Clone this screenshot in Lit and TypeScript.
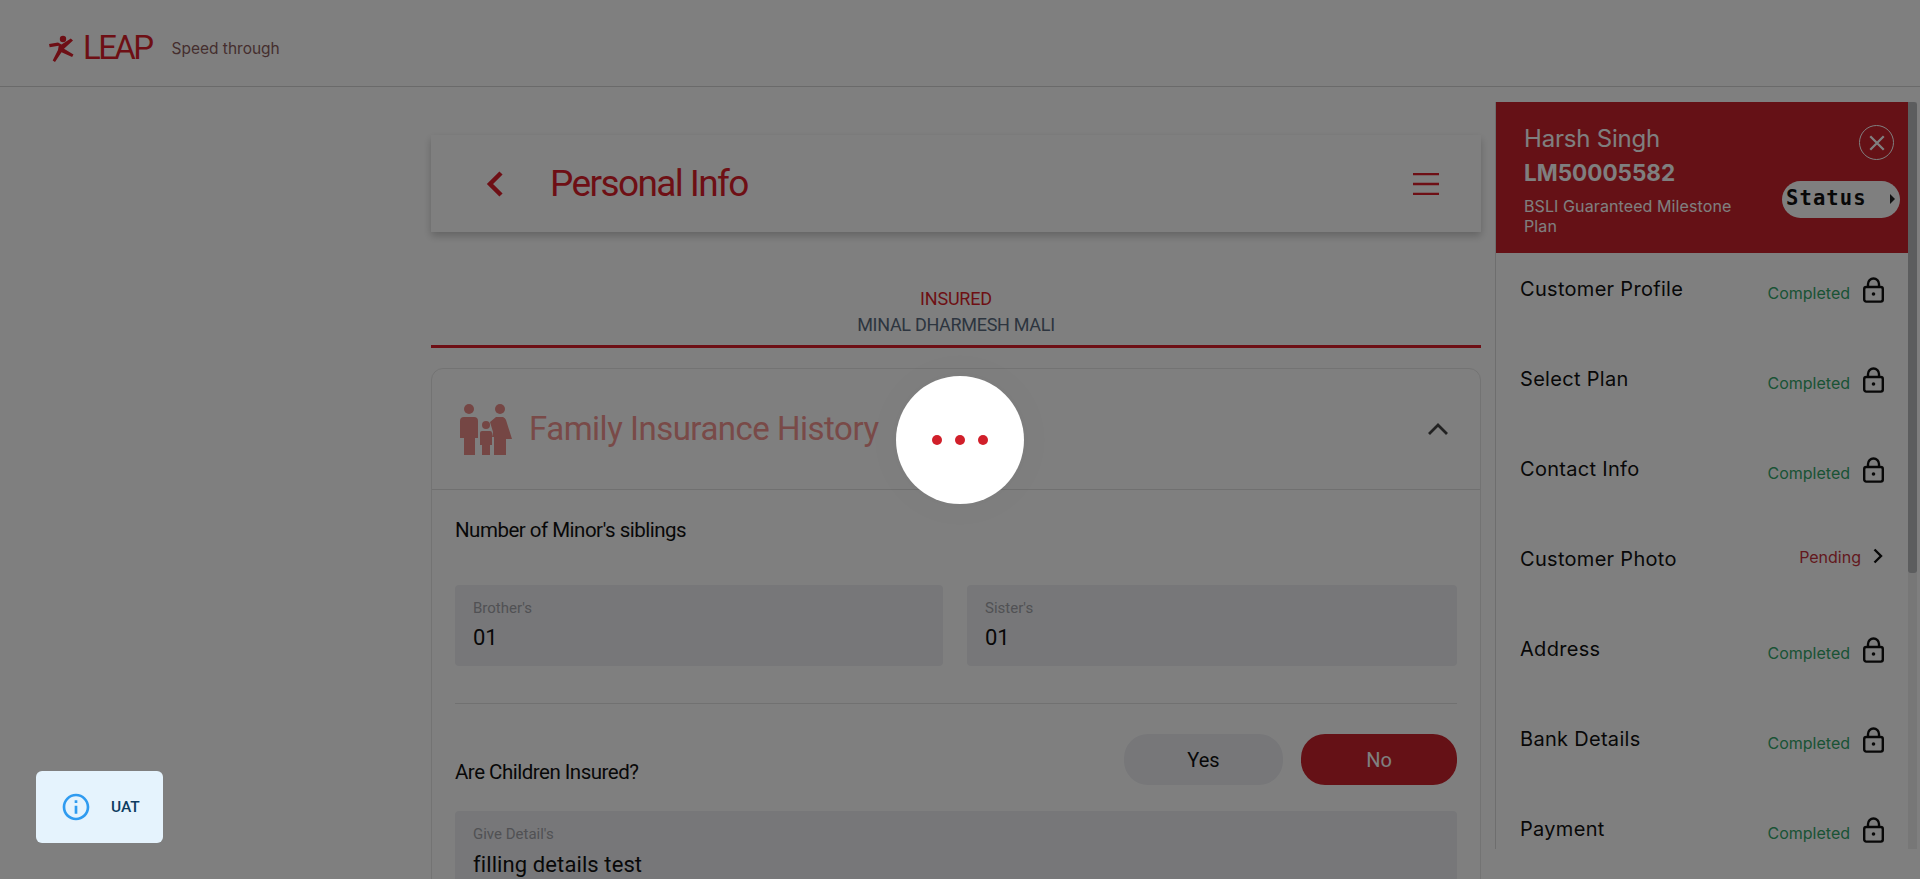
import { LitElement, html, css, svg } from "lit";
import { customElement } from "lit/decorators.js";

const din = css`"Roboto", "Liberation Sans", sans-serif`;

const steps = [
  { name: "Customer Profile", done: true },
  { name: "Select Plan", done: true },
  { name: "Contact Info", done: true },
  { name: "Customer Photo", done: false },
  { name: "Address", done: true },
  { name: "Bank Details", done: true },
  { name: "Payment", done: true },
];

const lockIcon = svg`<svg class="lock" viewBox="0 0 21 26" width="21" height="26" fill="none" stroke="currentColor" stroke-width="2.4">
  <rect x="1.2" y="10" width="18.6" height="14.6" rx="2"></rect>
  <path d="M5 10V7a5.5 5.5 0 0 1 11 0v3"></path>
  <circle cx="10.5" cy="17" r="1.8" fill="currentColor" stroke="none"></circle>
</svg>`;

@customElement("app-root")
export class AppRoot extends LitElement {
  static styles = css`
    :host {
      display: block;
      position: relative;
      width: 1920px;
      height: 879px;
      overflow: hidden;
      background: #fff;
      font-family: ${din};
    }
    .topbar {
      border-bottom: 1px solid #d4d4d4;
      display: flex;
      align-items: center;
      padding: 10px 0 0 49px;
      box-sizing: border-box;
      height: 87px;
    }
    .logo {
      display: flex;
      align-items: center;
      gap: 9px;
      color: #dc1f2b;
    }
    .logo-text {
      font-size: 33px;
      line-height: 32px;
      letter-spacing: -2.6px;
      margin-right: 20px;
    }
    .tagline {
      font-family: "Inter", sans-serif;
      font-size: 15.5px;
      color: #8a5c5c;
    }
    .body {
      display: flex;
      padding-left: 431px;
      gap: 14px;
    }
    .page {
      width: 1050px;
      flex: none;
      padding-top: 48px;
    }
    .title-card {
      height: 97px;
      display: flex;
      align-items: center;
      padding: 0 42px 0 55px;
      box-shadow: 0 4px 8px rgba(0, 0, 0, 0.22);
      color: #dc1f2b;
    }
    .title-card h1 {
      margin: 0 0 0 46px;
      flex: 1;
      font-size: 37px;
      font-weight: 400;
      letter-spacing: -1.6px;
    }
    .person {
      margin-top: 54px;
      text-align: center;
      border-bottom: 3px solid #dc1f2b;
      height: 59px;
      font-size: 18px;
      line-height: 26px;
    }
    .person .role {
      color: #dc1f2b;
      letter-spacing: -0.2px;
    }
    .person .who {
      color: #5a6b7e;
      letter-spacing: -0.3px;
    }
    .card {
      margin-top: 20px;
      border: 1px solid #e6e6e6;
      border-radius: 12px 12px 0 0;
    }
    .card-head {
      height: 120px;
      display: flex;
      align-items: center;
      padding: 0 32px 0 28px;
      border-bottom: 1px solid #e0e0e0;
    }
    .card-head h2 {
      margin: 0 0 0 17px;
      flex: 1;
      font-size: 33px;
      font-weight: 400;
      color: #f29490;
      letter-spacing: -0.5px;
      position: relative;
      top: -1px;
    }
    .card-body {
      padding: 0 23px;
    }
    .question {
      margin: 0;
      font-size: 20.5px;
      line-height: 26px;
      color: #111;
      letter-spacing: -0.5px;
    }
    .siblings {
      padding-top: 27px;
    }
    .field-row {
      display: grid;
      grid-template-columns: 488px 490px;
      gap: 24px;
      margin-top: 42px;
    }
    .field {
      background: #eeeff3;
      border-radius: 4px;
      height: 81px;
      padding: 15px 18px 0;
      box-sizing: border-box;
    }
    .field label {
      display: block;
      font-size: 15px;
      line-height: 17px;
      color: #a2a3a8;
    }
    .field span {
      display: block;
      margin-top: 8px;
      font-size: 22px;
      line-height: 26px;
      color: #111;
    }
    .divider {
      height: 1px;
      background: #e2e2e2;
      margin-top: 37px;
    }
    .insured {
      display: flex;
      align-items: flex-end;
      padding-top: 30px;
    }
    .insured .question {
      flex: 1;
    }
    .pill {
      width: 159px;
      height: 51px;
      border-radius: 24px;
      background: #eeeff3;
      font-size: 20px;
      display: flex;
      align-items: center;
      justify-content: center;
      color: #111;
    }
    .pill.on {
      width: 156px;
      margin-left: 18px;
      background: #ca222c;
      color: #fff;
    }
    .details {
      margin-top: 26px;
      height: 110px;
    }
    .details span {
      margin-top: 9px;
      letter-spacing: 0.1px;
    }
    .panel {
      margin-top: 15px;
      width: 422px;
      height: 747px;
      flex: none;
      display: flex;
      border-left: 1px solid #dcdcdc;
      box-sizing: border-box;
    }
    .panel-main {
      flex: 1;
      overflow: hidden;
    }
    .panel-head {
      height: 151px;
      box-sizing: border-box;
      background: #ca222c;
      color: #fff;
      display: flex;
      padding: 23px 8px 0 28px;
      font-family: "Inter", sans-serif;
    }
    .head-text {
      flex: 1;
    }
    .head-name {
      font-size: 24px;
      line-height: 28px;
      letter-spacing: -0.2px;
    }
    .head-code {
      font-size: 22.5px;
      line-height: 30px;
      font-weight: 700;
      margin-top: 5px;
    }
    .head-plan {
      font-size: 16px;
      line-height: 20px;
      margin-top: 8px;
      width: 230px;
      letter-spacing: 0.1px;
    }
    .head-side {
      display: flex;
      flex-direction: column;
      align-items: flex-end;
    }
    .close {
      width: 35px;
      height: 35px;
      border: 1px solid #fff;
      border-radius: 50%;
      margin: 0 6px 0 0;
      display: flex;
      align-items: center;
      justify-content: center;
      box-sizing: border-box;
    }
    .status {
      margin-top: 21px;
      width: 118px;
      height: 37px;
      border-radius: 19px;
      background: #fff;
      color: #111;
      display: flex;
      align-items: center;
      font-family: "DejaVu Sans Mono", monospace;
      font-weight: 700;
      font-size: 20.5px;
      letter-spacing: 1.1px;
      padding: 0 0 3px 4px;
      box-sizing: border-box;
      position: relative;
    }
    .status i {
      position: absolute;
      right: 5px;
      top: 13px;
      border-left: 5px solid #222;
      border-top: 5px solid transparent;
      border-bottom: 5px solid transparent;
    }
    .step {
      height: 90px;
      display: flex;
      padding: 23px 24px 0 24px;
      box-sizing: border-box;
      font-family: "Inter", sans-serif;
      color: #111;
    }
    .step-name {
      flex: 1;
      font-size: 20px;
      line-height: 26px;
      letter-spacing: 0.3px;
    }
    .step-state {
      font-size: 16px;
      line-height: 22px;
      margin-top: 6px;
    }
    .done {
      color: #33a66a;
    }
    .pending {
      color: #c6323c;
      margin-top: 0;
    }
    .lock {
      margin: 1px 0 0 13px;
    }
    .next {
      margin: 2px 1px 0 12px;
    }
    .scrollbar {
      width: 9px;
      background: #efefef;
    }
    .thumb {
      height: 471px;
      background: #b8babd;
      border-radius: 0 3px 3px 3px;
    }
    .overlay {
      position: absolute;
      inset: 0;
      background: rgba(0, 0, 0, 0.5);
    }
    .loader {
      position: absolute;
      left: 896px;
      top: 376px;
      width: 128px;
      height: 128px;
      border-radius: 50%;
      background: #fff;
      box-shadow: 0 0 40px rgba(0, 0, 0, 0.03);
      display: flex;
      align-items: center;
      justify-content: center;
      gap: 13px;
    }
    .loader b {
      width: 10px;
      height: 10px;
      border-radius: 50%;
      background: #d11f2a;
    }
    .toast {
      position: absolute;
      left: 36px;
      top: 771px;
      width: 127px;
      height: 72px;
      border-radius: 6px;
      background: #e5f3fd;
      display: flex;
      align-items: center;
      padding-left: 24px;
      box-sizing: border-box;
      gap: 19px;
      font-size: 15.5px;
      font-weight: 500;
      color: #0d3c61;
    }
  `;

  render() {
    return html`
      <div class="topbar">
        <div class="logo">
          <svg width="25" height="27" viewBox="0 0 25 27" fill="currentColor">
            <circle cx="14" cy="4" r="3.2"></circle>
            <path d="M0 9l9-1.400 3.500 2 9.300-6.100L24 5.500l-9 8.300 9.500 5.700-1.400 2.400-10.600-4.600-6.500 9.700-2.300-1.400 5.300-10.600.7-4.300-9 1.600z"></path>
          </svg>
          <span class="logo-text">LEAP</span>
        </div>
        <span class="tagline">Speed through</span>
      </div>
      <div class="body">
        <div class="page">
          <div class="title-card">
            <svg width="18" height="26" viewBox="0 0 18 26" fill="none" stroke="currentColor" stroke-width="4.5">
              <path d="M15 2L4 13l11 11"></path>
            </svg>
            <h1>Personal Info</h1>
            <svg width="26" height="22" viewBox="0 0 26 22" fill="none" stroke="currentColor" stroke-width="2.4">
              <path d="M0 1h26M0 11h26M0 21h26"></path>
            </svg>
          </div>
          <div class="person">
            <div class="role">INSURED</div>
            <div class="who">MINAL DHARMESH MALI</div>
          </div>
          <div class="card">
            <div class="card-head">
              <svg width="52" height="51" viewBox="0 0 52 51" fill="#ea8d88">
                <circle cx="9" cy="5" r="5"></circle>
                <path d="M0 17a4 4 0 0 1 4-4h10a4 4 0 0 1 4 4v17h-3v17H4V34H0z"></path>
                <circle cx="40" cy="5" r="5"></circle>
                <path d="M36 13h7a5 5 0 0 1 3 3l6 19h-6v16H34V33h-2l1-5-3-10z"></path>
                <circle cx="26" cy="21" r="4"></circle>
                <path d="M20 29a2 2 0 0 1 2-2h8a2 2 0 0 1 2 2v12h-2v10h-8V41h-2z"></path>
              </svg>
              <h2>Family Insurance History</h2>
              <svg width="20" height="12" viewBox="0 0 20 12" fill="none" stroke="#444" stroke-width="2.8">
                <path d="M1 11l9-9 9 9"></path>
              </svg>
            </div>
            <div class="card-body">
              <div class="siblings">
                <p class="question">Number of Minor's siblings</p>
                <div class="field-row">
                  <div class="field"><label>Brother's</label><span>01</span></div>
                  <div class="field"><label>Sister's</label><span>01</span></div>
                </div>
              </div>
              <div class="divider"></div>
              <div class="insured">
                <p class="question">Are Children Insured?</p>
                <div class="pill">Yes</div>
                <div class="pill on">No</div>
              </div>
              <div class="field details"><label>Give Detail's</label><span>filling details test</span></div>
            </div>
          </div>
        </div>
        <div class="panel">
          <div class="panel-main">
            <div class="panel-head">
              <div class="head-text">
                <div class="head-name">Harsh Singh</div>
                <div class="head-code">LM50005582</div>
                <div class="head-plan">BSLI Guaranteed Milestone Plan</div>
              </div>
              <div class="head-side">
                <div class="close">
                  <svg width="18" height="18" viewBox="0 0 16 16" stroke="#fff" stroke-width="2"><path d="M2 2l12 12M14 2L2 14"></path></svg>
                </div>
                <div class="status">Status<i></i></div>
              </div>
            </div>
            ${steps.map(
              (s) => html`<div class="step">
                <span class="step-name">${s.name}</span>
                ${s.done
                  ? html`<span class="step-state done">Completed</span>${lockIcon}`
                  : html`<span class="step-state pending">Pending</span>
                      <svg class="next" width="10" height="16" viewBox="0 0 10 16" fill="none" stroke="currentColor" stroke-width="2.4"><path d="M1.500 1.500L8 8l-6.500 6.500"></path></svg>`}
              </div>`
            )}
          </div>
          <div class="scrollbar"><div class="thumb"></div></div>
        </div>
      </div>
      <div class="overlay"></div>
      <div class="loader"><b></b><b></b><b></b></div>
      <div class="toast">
        <svg width="32" height="32" viewBox="0 0 24 24" fill="#2f9bf0">
          <path d="M11 7h2v2h-2zm0 4h2v6h-2zm1-9C6.480 2 2 6.480 2 12s4.480 10 10 10 10-4.480 10-10S17.520 2 12 2zm0 18c-4.410 0-8-3.590-8-8s3.590-8 8-8 8 3.590 8 8-3.590 8-8 8z"></path>
        </svg>
        <span>UAT</span>
      </div>
    `;
  }
}
